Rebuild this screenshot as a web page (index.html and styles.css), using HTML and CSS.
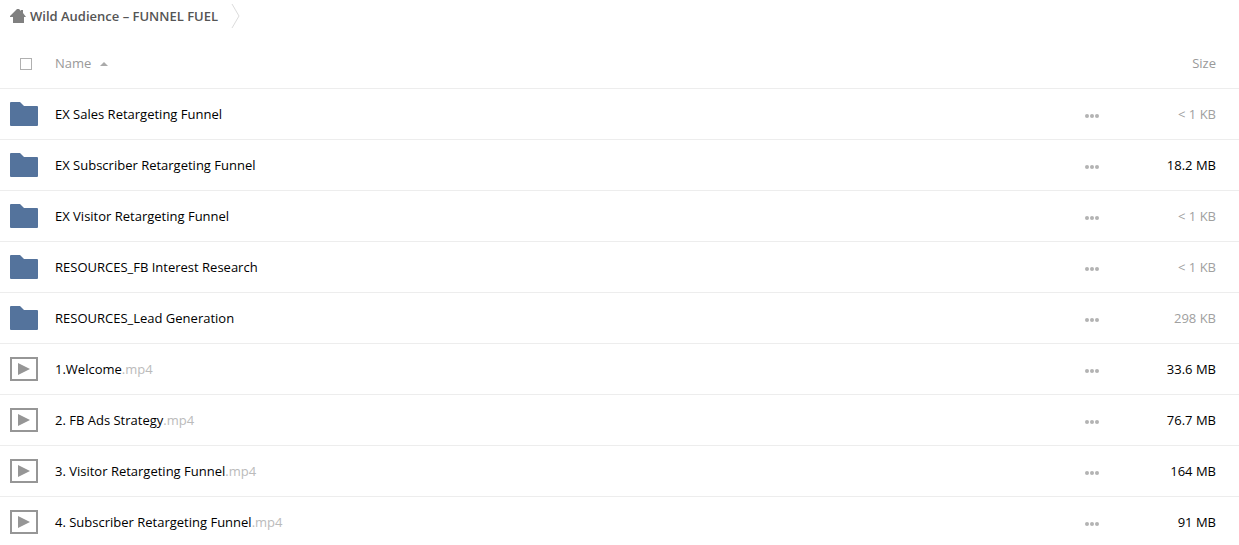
FILE: index.html
```html
<!DOCTYPE html>
<html lang="en">
<head>
  <meta charset="UTF-8">
  <meta name="viewport" content="width=device-width, initial-scale=1.0">
  <title>Wild Audience – FUNNEL FUEL</title>
  <link rel="stylesheet" href="styles.css">
</head>
<body>
  <svg class="sprite" aria-hidden="true">
    <symbol id="folder" viewBox="0 0 28 24">
      <path fill="#54739c" d="M1 0h9l4 4h13q1 0 1 1v18q0 1-1 1H1q-1 0-1-1V1q0-1 1-1z"/>
    </symbol>
    <symbol id="video" viewBox="0 0 28 24">
      <rect x="1" y="1" width="26" height="22" fill="#fff" stroke="#969696" stroke-width="2"/>
      <path fill="#969696" d="M8 6l12 6-12 6z"/>
    </symbol>
    <symbol id="dots" viewBox="0 0 14 4">
      <g fill="#b3b3b3">
        <circle cx="2" cy="2" r="2"/>
        <circle cx="7" cy="2" r="2"/>
        <circle cx="12" cy="2" r="2"/>
      </g>
    </symbol>
  </svg>

  <nav class="breadcrumb" aria-label="Breadcrumb">
    <a href="#">
      <svg class="home" viewBox="0 0 16 14" aria-hidden="true">
        <path fill="#808080" d="M7 0h2l2 2V1h2v3l3 4h-2v6H3V8H0V7z"/>
      </svg>
      Wild Audience – FUNNEL FUEL
    </a>
    <svg class="crumb-arrow" viewBox="0 0 10 26" aria-hidden="true">
      <path fill="none" stroke="#dcdcdc" d="M1 1l7 12-7 12"/>
    </svg>
  </nav>

  <main>
    <table class="files">
      <thead>
        <tr>
          <th class="icon"><input type="checkbox" class="select-all" aria-label="Select all"></th>
          <th class="name"><button type="button" class="sort">Name <span class="sort-arrow"></span></button></th>
          <th class="actions"></th>
          <th class="size"><button type="button" class="sort">Size</button></th>
        </tr>
      </thead>
      <tbody>
        <tr>
          <td class="icon"><svg class="file-icon"><use href="#folder"/></svg></td>
          <td class="name"><a href="#">EX Sales Retargeting Funnel</a></td>
          <td class="actions"><button type="button" class="more" aria-label="More"><svg><use href="#dots"/></svg></button></td>
          <td class="size small">&lt; 1 KB</td>
        </tr>
        <tr>
          <td class="icon"><svg class="file-icon"><use href="#folder"/></svg></td>
          <td class="name"><a href="#">EX Subscriber Retargeting Funnel</a></td>
          <td class="actions"><button type="button" class="more" aria-label="More"><svg><use href="#dots"/></svg></button></td>
          <td class="size">18.2 MB</td>
        </tr>
        <tr>
          <td class="icon"><svg class="file-icon"><use href="#folder"/></svg></td>
          <td class="name"><a href="#">EX Visitor Retargeting Funnel</a></td>
          <td class="actions"><button type="button" class="more" aria-label="More"><svg><use href="#dots"/></svg></button></td>
          <td class="size small">&lt; 1 KB</td>
        </tr>
        <tr>
          <td class="icon"><svg class="file-icon"><use href="#folder"/></svg></td>
          <td class="name"><a href="#">RESOURCES_FB Interest Research</a></td>
          <td class="actions"><button type="button" class="more" aria-label="More"><svg><use href="#dots"/></svg></button></td>
          <td class="size small">&lt; 1 KB</td>
        </tr>
        <tr>
          <td class="icon"><svg class="file-icon"><use href="#folder"/></svg></td>
          <td class="name"><a href="#">RESOURCES_Lead Generation</a></td>
          <td class="actions"><button type="button" class="more" aria-label="More"><svg><use href="#dots"/></svg></button></td>
          <td class="size small">298 KB</td>
        </tr>
        <tr>
          <td class="icon"><svg class="file-icon"><use href="#video"/></svg></td>
          <td class="name"><a href="#">1.Welcome<span class="ext">.mp4</span></a></td>
          <td class="actions"><button type="button" class="more" aria-label="More"><svg><use href="#dots"/></svg></button></td>
          <td class="size">33.6 MB</td>
        </tr>
        <tr>
          <td class="icon"><svg class="file-icon"><use href="#video"/></svg></td>
          <td class="name"><a href="#">2. FB Ads Strategy<span class="ext">.mp4</span></a></td>
          <td class="actions"><button type="button" class="more" aria-label="More"><svg><use href="#dots"/></svg></button></td>
          <td class="size">76.7 MB</td>
        </tr>
        <tr>
          <td class="icon"><svg class="file-icon"><use href="#video"/></svg></td>
          <td class="name"><a href="#">3. Visitor Retargeting Funnel<span class="ext">.mp4</span></a></td>
          <td class="actions"><button type="button" class="more" aria-label="More"><svg><use href="#dots"/></svg></button></td>
          <td class="size">164 MB</td>
        </tr>
        <tr>
          <td class="icon"><svg class="file-icon"><use href="#video"/></svg></td>
          <td class="name"><a href="#">4. Subscriber Retargeting Funnel<span class="ext">.mp4</span></a></td>
          <td class="actions"><button type="button" class="more" aria-label="More"><svg><use href="#dots"/></svg></button></td>
          <td class="size">91 MB</td>
        </tr>
      </tbody>
    </table>
  </main>
</body>
</html>
```
FILE: styles.css
```css
* { margin: 0; padding: 0; box-sizing: border-box; }
body {
  font-family: 'Open Sans', sans-serif;
  font-size: 13px;
  line-height: 20px;
  background-color: #fff;
  color: #000;
}
a {
  color: inherit;
  text-decoration: none;
}
button {
  background: none;
  border: none;
  font: inherit;
  color: inherit;
  cursor: pointer;
}
svg {
  display: block;
}
.sprite {
  display: none;
}

.breadcrumb {
  display: flex;
  align-items: center;
  gap: 13px;
  padding: 3px 10px 9px;
}
.breadcrumb a {
  display: flex;
  align-items: center;
  gap: 4px;
  font-weight: 600;
  color: #555;
}
.home {
  width: 16px;
  height: 14px;
}
.crumb-arrow {
  width: 10px;
  height: 26px;
}

.files {
  width: 100%;
  table-layout: fixed;
  border-collapse: separate;
  border-spacing: 0;
}
.files th,
.files td {
  height: 51px;
  border-bottom: 1px solid #ededed;
  text-align: left;
  vertical-align: middle;
}
.files th {
  font-weight: 400;
  color: #999;
}
.files .icon {
  width: 55px;
  padding-left: 10px;
}
.files .actions {
  width: 60px;
}
.files .size {
  width: 100px;
  padding-right: 23px;
  text-align: right;
}
.files .small {
  color: #a0a0a0;
}
.files tbody tr:hover {
  background-color: #f8f8f8;
}

.select-all {
  appearance: none;
  display: block;
  width: 12px;
  height: 12px;
  margin: 2px 0 0 10px;
  border: 1px solid #b0b0b0;
  background-color: #fff;
}
.select-all:checked {
  background-color: #b0b0b0;
}
.sort {
  display: inline-flex;
  align-items: center;
  gap: 9px;
}
.sort-arrow {
  margin-top: 2px;
  border: 4px solid transparent;
  border-top: none;
  border-bottom-color: #aaa;
}
.file-icon {
  width: 28px;
  height: 24px;
}
.ext {
  color: #bbb;
}
.more {
  display: block;
  padding: 8px 6px 4px;
}
.more svg {
  width: 14px;
  height: 4px;
}
```
